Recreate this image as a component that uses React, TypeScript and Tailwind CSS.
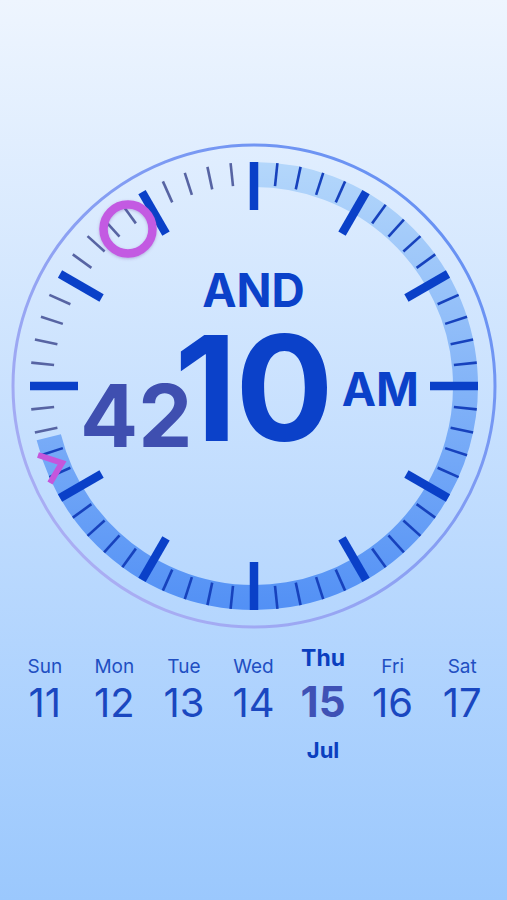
import React from "react";

const CX = 254;
const CY = 256;
const FILL_END = 256; // degrees covered by the seconds band

const polar = (r: number, deg: number) => {
  const a = (deg * Math.PI) / 180;
  return [CX + r * Math.sin(a), CY - r * Math.cos(a)];
};

const days = [
  { name: "Sun", num: "11" },
  { name: "Mon", num: "12" },
  { name: "Tue", num: "13" },
  { name: "Wed", num: "14" },
  { name: "Thu", num: "15", today: true },
  { name: "Fri", num: "16" },
  { name: "Sat", num: "17" },
];

const ClockFace = () => {
  const bandR = 211.5;
  const [sx, sy] = polar(bandR, 0);
  const [ex, ey] = polar(bandR, FILL_END);
  const band = `M ${sx} ${sy} A ${bandR} ${bandR} 0 1 1 ${ex} ${ey}`;

  const ticks = Array.from({ length: 60 }, (_, i) => {
    const deg = i * 6;
    const major = i % 5 === 0;
    const [x1, y1] = polar(major ? 176 : 201, deg);
    const [x2, y2] = polar(224, deg);
    const color = major ? "#0a40c8" : deg <= FILL_END ? "#1742bd" : "#5764a3";
    return (
      <line
        key={i}
        x1={x1}
        y1={y1}
        x2={x2}
        y2={y2}
        stroke={color}
        strokeWidth={major ? 8.5 : 2.6}
      />
    );
  });

  return (
    <svg width="507" height="512" viewBox="0 0 507 512" className="block">
      <defs>
        <linearGradient id="ring" x1="1" y1="0" x2="0" y2="1">
          <stop offset="0%" stopColor="#5b8cf3" />
          <stop offset="100%" stopColor="#b7b3f3" />
        </linearGradient>
        <linearGradient id="band" gradientUnits="userSpaceOnUse" x1="0" y1="32" x2="0" y2="482">
          <stop offset="0%" stopColor="#b4d7fb" />
          <stop offset="100%" stopColor="#5290f5" />
        </linearGradient>
        <filter id="glow" x="-50%" y="-50%" width="200%" height="200%">
          <feDropShadow dx="0" dy="1" stdDeviation="1.5" floodColor="#6a3fa0" floodOpacity="0.35" />
        </filter>
      </defs>
      <circle cx={CX} cy={CY} r="241" fill="none" stroke="url(#ring)" strokeWidth="3" />
      <path d={band} fill="none" stroke="url(#band)" strokeWidth="25" />
      {ticks}
      <circle cx="128" cy="99" r="24.5" fill="none" stroke="#c35ae2" strokeWidth="8.5" filter="url(#glow)" />
      <polyline
        points="38,325 62,333 50,353"
        fill="none"
        stroke="#c556dc"
        strokeWidth="6"
        strokeLinejoin="miter"
      />
    </svg>
  );
};

export default function App() {
  return (
    <div
      className="w-full h-[900px] overflow-hidden bg-gradient-to-b from-[#eef5fe] to-[#9bc8fd]"
      style={{ fontFamily: "Inter, 'Noto Sans', sans-serif" }}
    >
      <div className="relative mt-[130px] h-[512px]">
        <ClockFace />
        <div className="absolute inset-0 flex flex-col items-center pt-[137px] font-bold">
          <div className="text-[46px] leading-none text-[#0b41c9]">AND</div>
          <div className="flex items-start justify-center pr-[8px]">
            <span className="mt-[60px] -mr-[18px] text-[86px] leading-none text-[#3f4fb0]">42</span>
            <span className="mt-[2px] text-[146px] leading-none tracking-[-2px] text-[#0b41c9]">10</span>
            <span className="mt-[53px] ml-[10px] text-[46px] leading-none text-[#0b41c9]">AM</span>
          </div>
        </div>
      </div>

      <div className="grid grid-cols-7 px-[10px] mt-[13px]">
        {days.map((d) =>
          d.today ? (
            <div key={d.name} className="flex flex-col items-center -mt-[9px] font-bold">
              <span className="text-[23px] leading-[24px] text-[#0b3fbf]">{d.name}</span>
              <span className="mt-[8px] text-[42px] leading-[48px] text-[#3f51b5]">{d.num}</span>
              <span className="mt-[11px] text-[22px] leading-[26px] text-[#0b3fbf]">Jul</span>
            </div>
          ) : (
            <div key={d.name} className="flex flex-col items-center">
              <span className="text-[19px] leading-[24px] text-[#1f4fc2]">{d.name}</span>
              <span className="text-[40px] leading-[48px] text-[#1a47c0]">{d.num}</span>
            </div>
          )
        )}
      </div>
    </div>
  );
}
